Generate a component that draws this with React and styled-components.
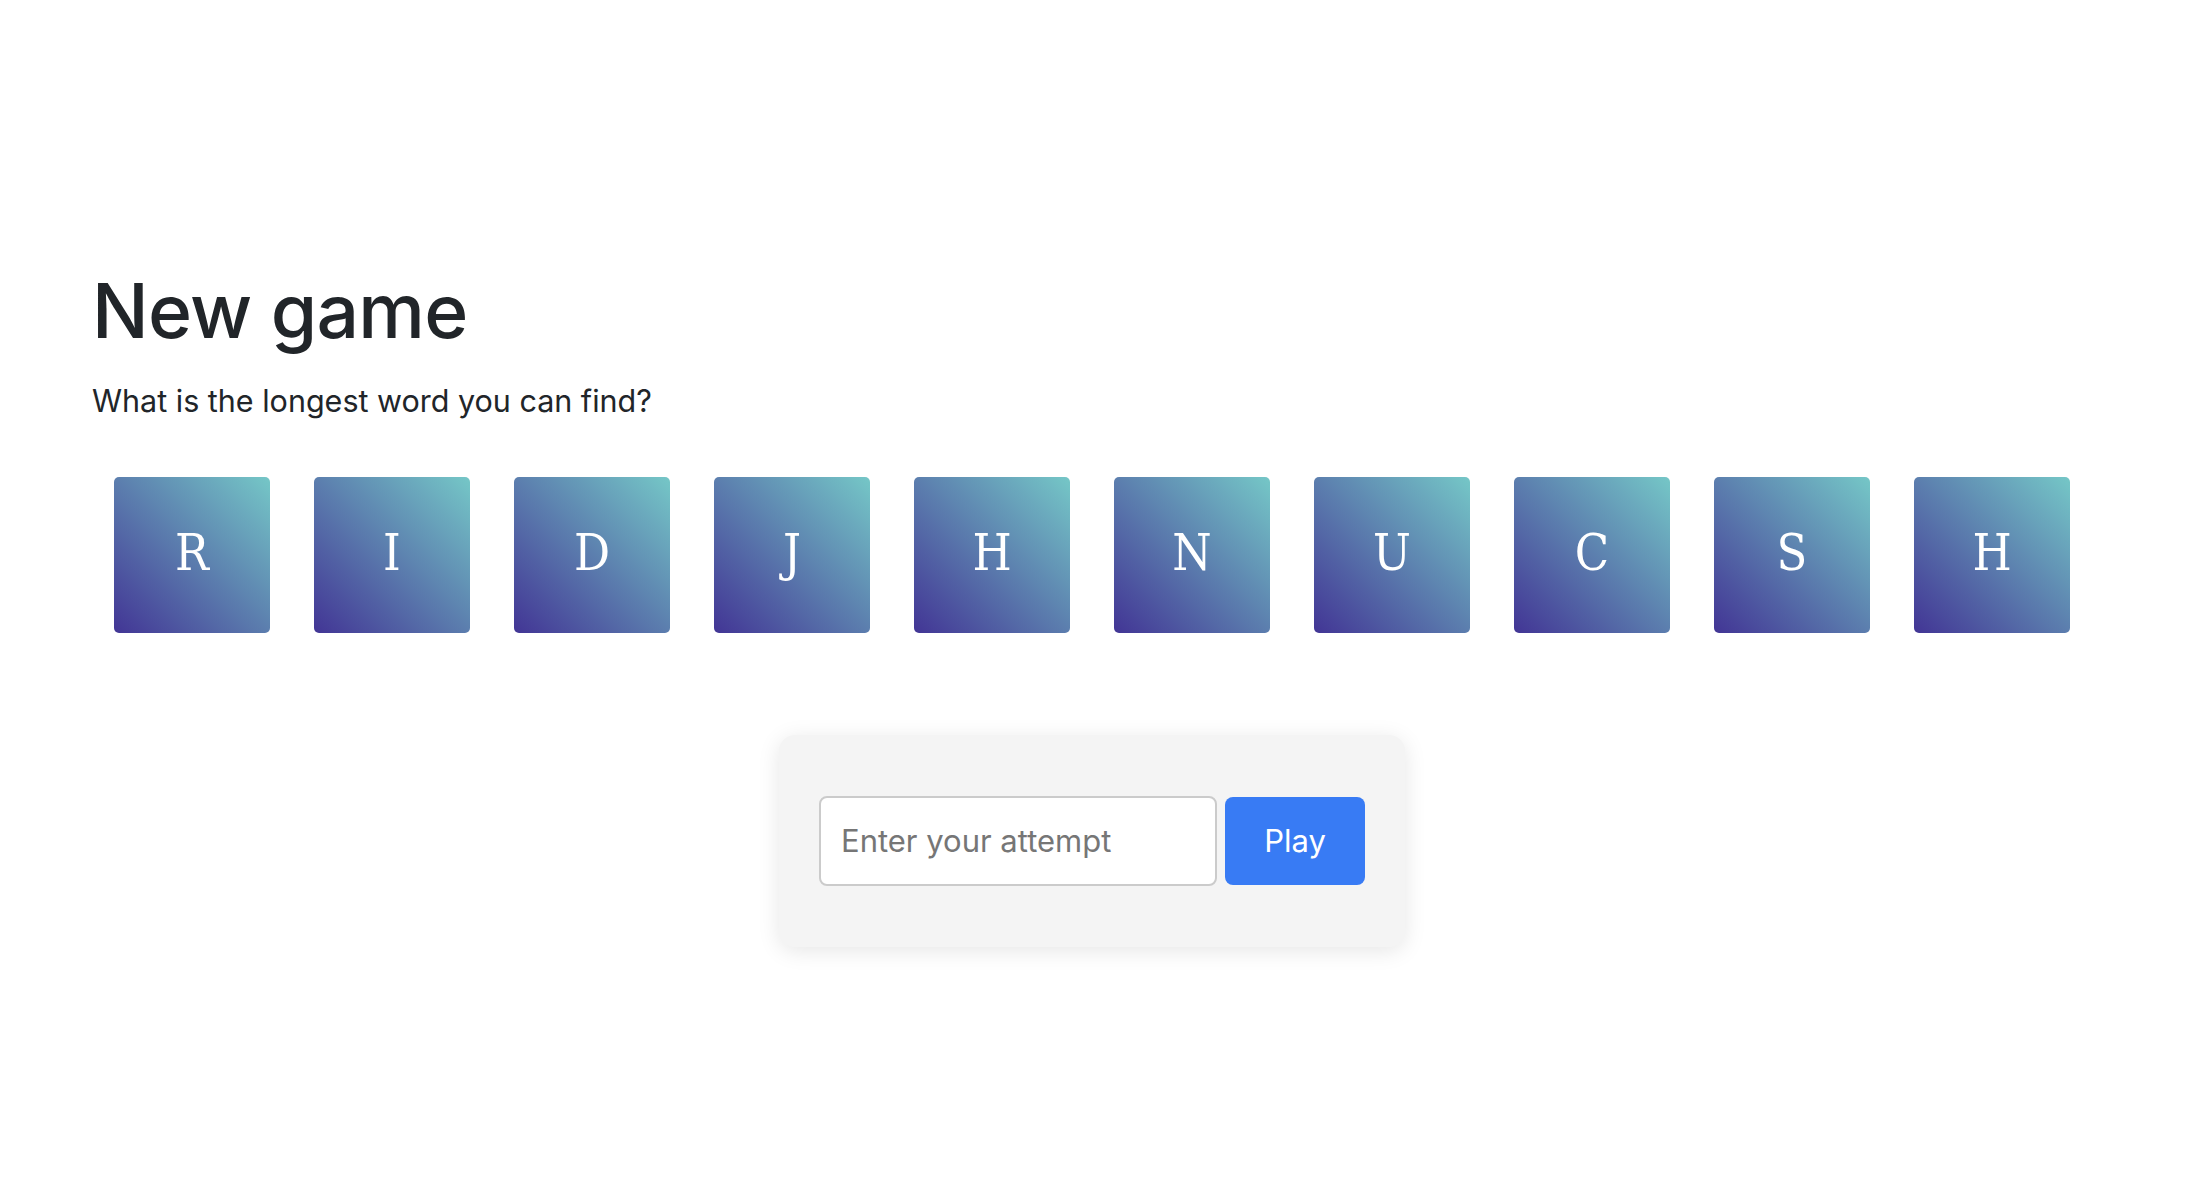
import React, { useState } from "react";
import styled, { createGlobalStyle } from "styled-components";

const GlobalStyle = createGlobalStyle`
  html, body {
    margin: 0;
    padding: 0;
    background: #ffffff;
  }

  body {
    font-family: Inter, "Noto Sans", "Liberation Sans", sans-serif;
    color: #212529;
  }

  * {
    box-sizing: border-box;
  }
`;

const Main = styled.main`
  width: 2000px;
  margin-left: 92px;
  padding: 266px 0 120px;
`;

const Title = styled.h1`
  margin: 0;
  font-size: 75px;
  font-weight: 500;
  line-height: 1.2;
  letter-spacing: -0.01em;
`;

const Lead = styled.p`
  margin: 22px 0 0;
  font-size: 30.5px;
  line-height: 1.5;
`;

const Letters = styled.div`
  display: flex;
  justify-content: space-around;
  margin-top: 53px;
`;

const Tile = styled.div`
  display: grid;
  place-items: center;
  width: 156px;
  height: 156px;
  border-radius: 5px;
  background: linear-gradient(to top right, #423595, #75c7c7);
  color: #ffffff;
  font-family: "DejaVu Serif", "Liberation Serif", serif;
  font-stretch: condensed;
  font-size: 50px;
  line-height: 1;
  padding-bottom: 4px;
`;

const FormWrap = styled.div`
  display: flex;
  justify-content: center;
  margin-top: 102px;
`;

const Form = styled.form`
  display: flex;
  align-items: center;
  gap: 8px;
  padding: 61px 40px;
  border-radius: 16px;
  background: #f4f4f4;
  box-shadow: 0 4px 22px rgba(0, 0, 0, 0.1);
`;

const Input = styled.input`
  width: 398px;
  height: 90px;
  padding: 0 20px;
  border: 2px solid #cbcbcb;
  border-radius: 8px;
  outline: 0;
  background: #ffffff;
  color: #212529;
  font-family: inherit;
  font-size: 31px;

  &::placeholder {
    color: #767676;
  }
`;

const PlayButton = styled.button`
  width: 140px;
  height: 88px;
  border: 0;
  border-radius: 8px;
  background: #387bf4;
  color: #ffffff;
  font-family: inherit;
  font-size: 31px;
  cursor: pointer;
`;

const LETTERS = ["R", "I", "D", "J", "H", "N", "U", "C", "S", "H"];

export default function App() {
  const [attempt, setAttempt] = useState("");

  return (
    <>
      <GlobalStyle />
      <Main>
        <Title>New game</Title>
        <Lead>What is the longest word you can find?</Lead>

        <Letters>
          {LETTERS.map((letter, index) => (
            <Tile key={index}>{letter}</Tile>
          ))}
        </Letters>

        <FormWrap>
          <Form onSubmit={(event) => event.preventDefault()}>
            <Input
              value={attempt}
              onChange={(event) => setAttempt(event.target.value)}
              placeholder="Enter your attempt"
            />
            <PlayButton type="submit">Play</PlayButton>
          </Form>
        </FormWrap>
      </Main>
    </>
  );
}
